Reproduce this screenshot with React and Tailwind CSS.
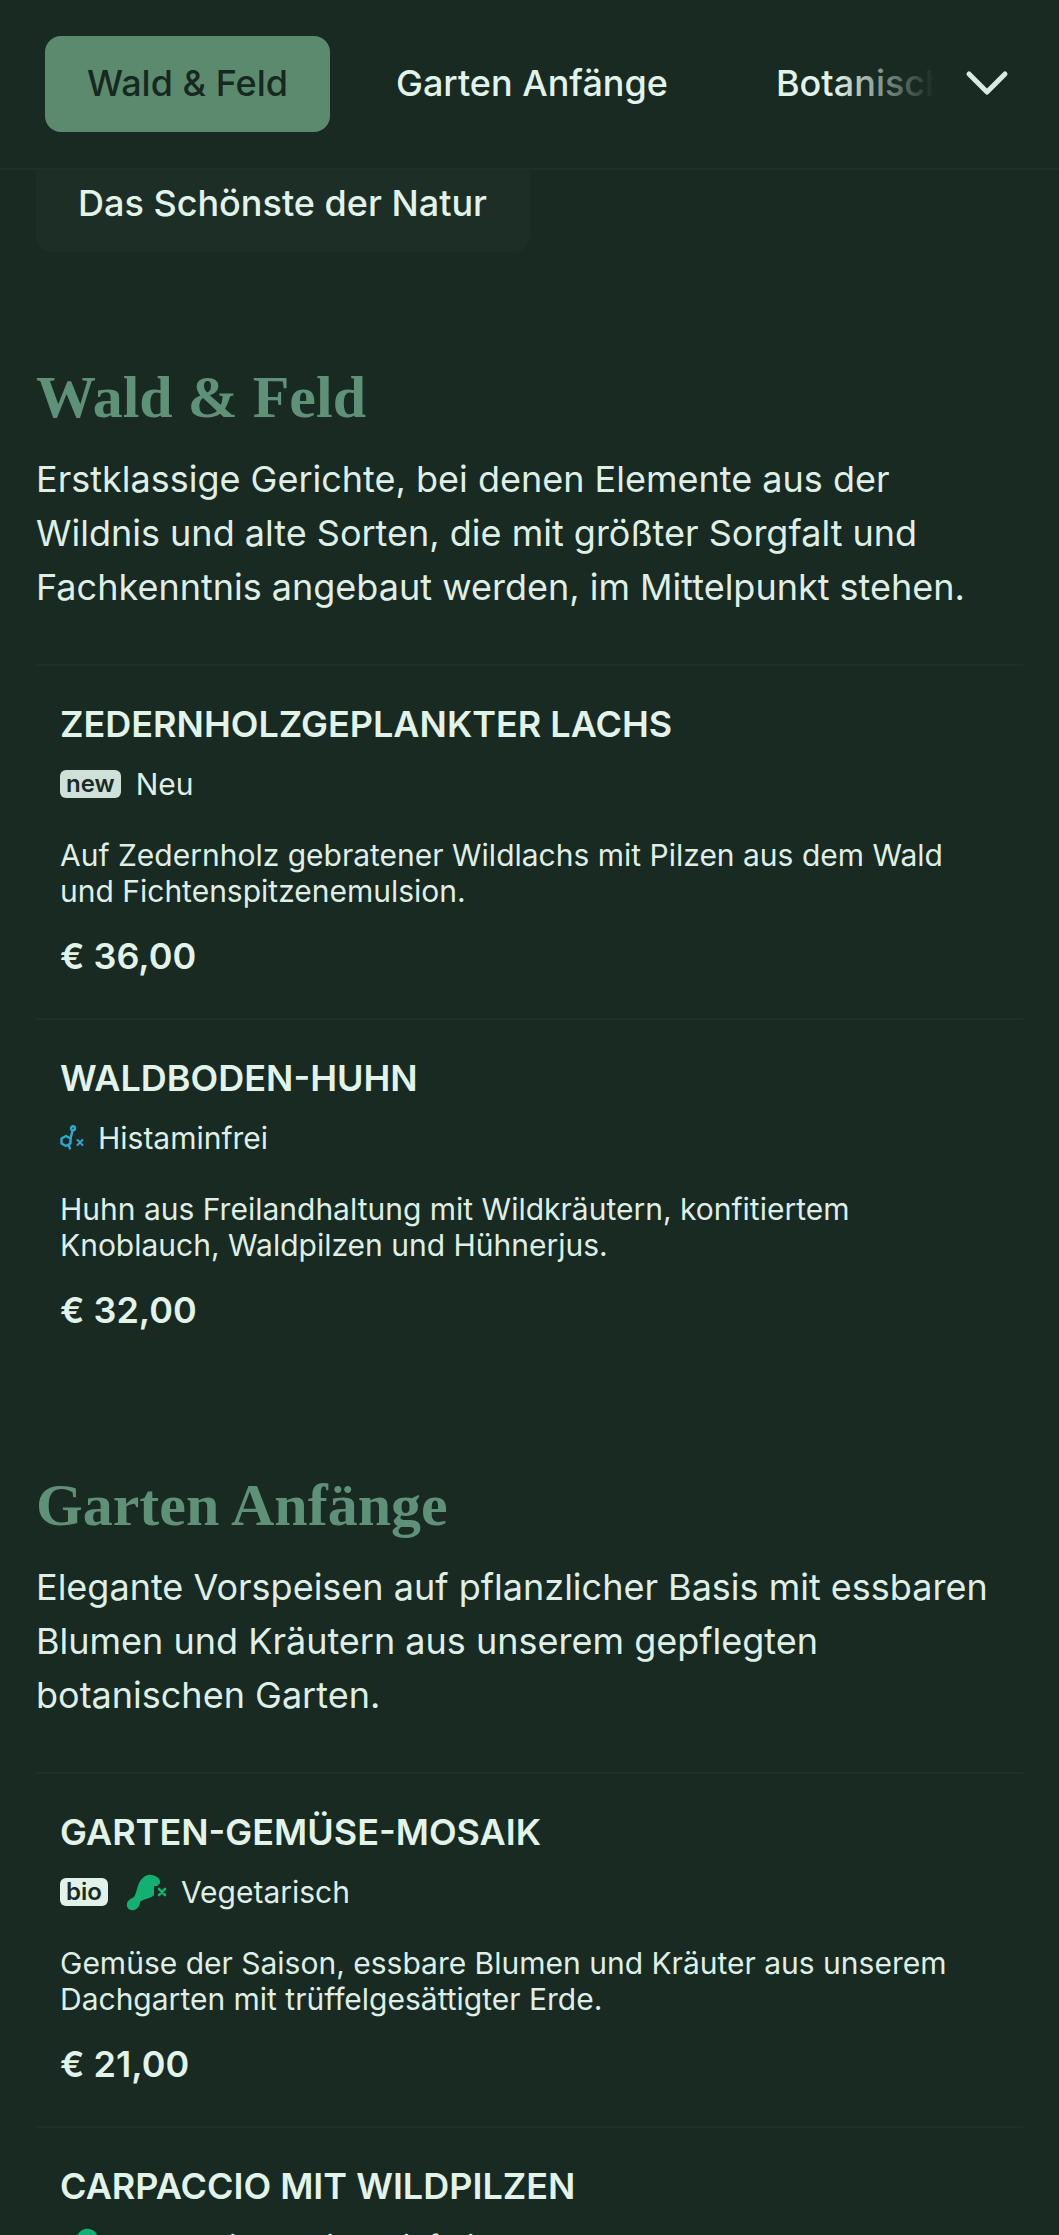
const INTER = "font-['Inter','Noto_Sans',sans-serif]";

function HistamineIcon() {
  return (
    <svg viewBox="0 0 25 26" className="-mr-[2px] h-[26px] w-[25px] shrink-0" fill="none" stroke="#2fa8cf" strokeWidth="2.4" strokeLinecap="round" strokeLinejoin="round">
      <circle cx="13" cy="3.2" r="2" />
      <path d="M12.6 5.2 L10.5 13.5" />
      <path d="M6 11 L10.5 13.5 L10.5 18.5 L6 21 L1.5 18.5 L1.5 13.5 Z" />
      <path d="M8.5 20 L10 23.5" />
      <path d="M17.5 15 L22.5 20 M22.5 15 L17.5 20" strokeWidth="2" />
    </svg>
  );
}

function DrumstickIcon() {
  return (
    <svg viewBox="0 0 41 37" className="ml-[3px] -mr-[1px] h-[37px] w-[41px] shrink-0">
      <path fill="#12b071" d="M22 1 C28 0 35 4 34 9 C33 11 30 12 30 15 C30 18 30 20 27 22 C23 25 17 25 14 28 C14 31 12 35 8 36 C4 37 0 34 1 30 C1 27 4 25 8 23 C10 20 11 14 13 9 C15 5 18 2 22 1 Z" />
      <path fill="#182a22" d="M28 12 h10 v12 h-10 Z" />
      <path stroke="#12b071" strokeWidth="2.6" strokeLinecap="round" d="M33 15 L39 21 M39 15 L33 21" />
    </svg>
  );
}

function Tag({ children, light }) {
  return (
    <span className={`rounded-md px-[6px] text-[24px] leading-[28px] font-semibold text-[#1a2a23] ${light ? "bg-[#e2f1ea]" : "bg-[#cfe0d8]"}`}>
      {children}
    </span>
  );
}

function Item({ title, tags, desc, price }) {
  return (
    <article className="border-t-2 border-[#1f3029] px-6 pt-[37px] pb-[41px]">
      <h3 className="text-[36px] leading-[42px] font-semibold text-[#e2f3ea]">{title}</h3>
      <div className="mt-[21px] flex h-[36px] items-center gap-[15px] text-[30px] text-[#dfefe7]">{tags}</div>
      <p className="mt-[35px] text-[30px] leading-[36px] text-[#dfefe7]">{desc}</p>
      {price && <p className="mt-[26px] text-[36px] leading-[42px] font-semibold text-[#e2f3ea]">{price}</p>}
    </article>
  );
}

function Section({ title, intro, children, className }) {
  return (
    <section className={className}>
      <h2 className="font-['Liberation_Serif',serif] text-[60px] leading-[78px] font-bold text-[#5f9178]">{title}</h2>
      <p className="mt-[16px] text-[36px] leading-[54px] text-[#dfefe7]">{intro}</p>
      <div className="mt-[50px]">{children}</div>
    </section>
  );
}

export default function App() {
  return (
    <div className={`${INTER} h-[2235px] w-[1059px] overflow-hidden bg-[#182a22]`}>
      <header className="relative flex h-[170px] items-center overflow-hidden border-b-2 border-[#1f3029]">
        <nav className="flex items-center gap-[23px] pl-[45px] whitespace-nowrap text-[36px] font-medium text-[#e2f3ea]">
          <span className="flex h-[96px] w-[285px] items-center justify-center rounded-2xl bg-[#5c8a6e] pb-[2px] text-[#16281f]">Wald &amp; Feld</span>
          <span className="px-[43px] pb-[2px]">Garten Anfänge</span>
          <span className="ml-[20px] px-[22px] pb-[2px]">Botanische Küche</span>
        </nav>
        <div className="absolute top-0 right-[124px] bottom-0 w-[100px] bg-gradient-to-r from-transparent to-[#182a22]" />
        <div className="absolute top-0 right-0 bottom-0 flex w-[124px] items-center bg-[#182a22] pl-[30px]">
          <svg viewBox="0 0 44 28" className="h-[28px] w-[44px]" fill="none" stroke="#d8ebe2" strokeWidth="5" strokeLinecap="round" strokeLinejoin="round">
            <path d="M4 4 L22 22 L40 4" />
          </svg>
        </div>
      </header>

      <div className="ml-[36px] flex h-[82px] w-[494px] items-center rounded-b-2xl bg-[#1c2e26] pb-[16px] pl-[42px] text-[36px] font-medium text-[#e2f3ea]">
        Das Schönste der Natur
      </div>

      <main className="px-[36px]">
        <Section
          className="mt-[106px]"
          title="Wald & Feld"
          intro="Erstklassige Gerichte, bei denen Elemente aus der Wildnis und alte Sorten, die mit größter Sorgfalt und Fachkenntnis angebaut werden, im Mittelpunkt stehen."
        >
          <Item
            title="ZEDERNHOLZGEPLANKTER LACHS"
            tags={<><Tag>new</Tag><span>Neu</span></>}
            desc="Auf Zedernholz gebratener Wildlachs mit Pilzen aus dem Wald und Fichtenspitzenemulsion."
            price="€ 36,00"
          />
          <Item
            title="WALDBODEN-HUHN"
            tags={<><HistamineIcon /><span>Histaminfrei</span></>}
            desc="Huhn aus Freilandhaltung mit Wildkräutern, konfitiertem Knoblauch, Waldpilzen und Hühnerjus."
            price="€ 32,00"
          />
        </Section>

        <Section
          className="mt-[94px]"
          title="Garten Anfänge"
          intro="Elegante Vorspeisen auf pflanzlicher Basis mit essbaren Blumen und Kräutern aus unserem gepflegten botanischen Garten."
        >
          <Item
            title="GARTEN-GEMÜSE-MOSAIK"
            tags={<><Tag light>bio</Tag><DrumstickIcon /><span>Vegetarisch</span></>}
            desc="Gemüse der Saison, essbare Blumen und Kräuter aus unserem Dachgarten mit trüffelgesättigter Erde."
            price="€ 21,00"
          />
          <Item
            title="CARPACCIO MIT WILDPILZEN"
            tags={<><DrumstickIcon /><span>Vegetarisch, Histaminfrei</span></>}
            desc=""
          />
        </Section>
      </main>
    </div>
  );
}
